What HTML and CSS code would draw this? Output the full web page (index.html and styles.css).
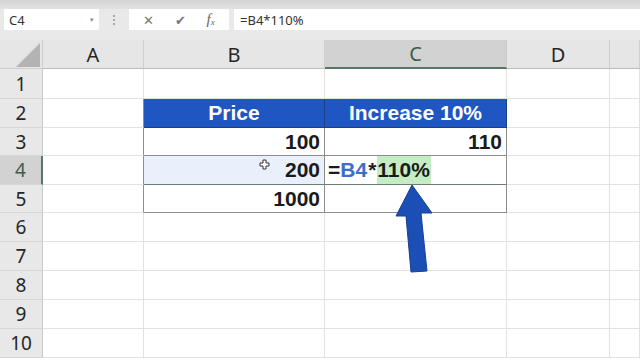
FILE: index.html
```html
<!DOCTYPE html>
<html lang="en">
<head>
<meta charset="utf-8">
<title>Excel – Increase 10%</title>
<link rel="stylesheet" href="styles.css">
</head>
<body>
<div class="topstrip"></div>

<!-- formula bar -->
<div class="fbar">
  <div class="namebox"><span>C4</span><span class="dd">&#9662;</span></div>
  <div class="grip"><i></i><i></i><i></i></div>
  <div class="btns">
    <span class="b-x">&#x2715;</span>
    <span class="b-ok">&#x2714;</span>
    <span class="b-fx">f<sub>x</sub></span>
  </div>
  <div class="finput">=B4*110%</div>
</div>

<!-- sheet -->
<div class="sheet">
  <div class="corner"><svg width="28" height="26" viewBox="0 0 28 26"><polygon points="26,1 26,25 2,25" fill="#b3b3b3"/></svg></div>
  <div class="ch">A</div><div class="ch">B</div><div class="ch sel">C</div><div class="ch">D</div><div class="ch"></div>

  <div class="rh">1</div><div class="c"></div><div class="c"></div><div class="c"></div><div class="c"></div><div class="c"></div>

  <div class="rh">2</div><div class="c tl"></div><div class="c th">Price</div><div class="c th">Increase 10%</div><div class="c"></div><div class="c"></div>

  <div class="rh">3</div><div class="c tl"></div><div class="c t num">100</div><div class="c t num">110</div><div class="c"></div><div class="c"></div>

  <div class="rh sel">4</div><div class="c tl"></div>
  <div class="c t num r4 b4">200
    <svg class="cur" width="11" height="11" viewBox="0 0 11 11"><path d="M4 1h3v3h3v3H7v3H4V7H1V4h3z" fill="#fff" stroke="#333" stroke-width="1"/></svg>
  </div>
  <div class="c t r4 act"><span>=</span><span class="ref">B4</span><span class="star">*</span><span class="hl">110%</span></div>
  <div class="c"></div><div class="c"></div>

  <div class="rh">5</div><div class="c tl"></div><div class="c t num">1000</div><div class="c t"></div><div class="c"></div><div class="c"></div>

  <div class="rh">6</div><div class="c"></div><div class="c"></div><div class="c"></div><div class="c"></div><div class="c"></div>
  <div class="rh">7</div><div class="c"></div><div class="c"></div><div class="c"></div><div class="c"></div><div class="c"></div>
  <div class="rh">8</div><div class="c"></div><div class="c"></div><div class="c"></div><div class="c"></div><div class="c"></div>
  <div class="rh">9</div><div class="c"></div><div class="c"></div><div class="c"></div><div class="c"></div><div class="c"></div>
  <div class="rh">10</div><div class="c"></div><div class="c"></div><div class="c"></div><div class="c"></div><div class="c"></div>

  <!-- pointer arrow -->
  <svg class="arrow" width="50" height="92" viewBox="0 0 50 92">
    <polygon points="22,2 42,30 31,30 37,88 21,89 16,33 6,33" fill="#1b4fb5" stroke="#163f94" stroke-width="1"/>
  </svg>
</div>
</body>
</html>
```

FILE: styles.css
```css
/* ── base ─────────────────────────── */
*,*::before,*::after{box-sizing:border-box}
body{margin:0;width:640px;height:360px;overflow:hidden;
     background:#fff;font-family:"Noto Sans","Liberation Sans",Arial,sans-serif;color:#222}

.topstrip{height:9px;background:linear-gradient(#d4d4d4,#e2e2e2)}

/* ── formula bar ──────────────────── */
.fbar{display:flex;align-items:center;height:31px;padding:0 0 10px 4px;
      background:#e9e9e9;font-size:13px}
.namebox{width:95px;height:21px;background:#fff;display:flex;align-items:center;
         justify-content:space-between;padding:0 5px 0 5px;color:#333}
.namebox .dd{font-size:7px;color:#888}
.grip{width:30px;display:flex;flex-direction:column;align-items:center;gap:2px}
.grip i{width:2px;height:2px;background:#aaa;display:block}
.btns{width:100px;height:21px;background:#fff;display:flex;align-items:center;
      justify-content:space-around;color:#666;font-size:14px;padding:0 4px}
.b-x{font-size:13px;color:#777}
.b-ok{font-size:13px;color:#777}
.b-fx{font-family:"Liberation Serif",serif;font-style:italic;font-size:15px;color:#666}
.b-fx sub{font-size:9px;vertical-align:-1px}
.finput{flex:1;height:21px;margin-left:5px;background:#fff;display:flex;align-items:center;
        padding-left:6px;color:#333}

/* ── sheet grid ───────────────────── */
.sheet{position:relative;display:grid;
       grid-template-columns:43px 101px 181px 182px 103px 30px;
       grid-template-rows:29px 30px 29px 28px 29px 28px 29px 29px 29px 29px 29px}
.corner{background:#e6e6e6;border-right:1px solid #cfcfcf;border-bottom:1px solid #cfcfcf;
        display:flex;align-items:flex-end;justify-content:flex-end}
.ch{background:#e6e6e6;border-right:1px solid #cfcfcf;border-bottom:1px solid #bcbcbc;
    display:flex;align-items:center;justify-content:center;font-size:20px;color:#262626}
.ch.sel{background:#d2d2d2;color:#3e5c4a;border-bottom:2px solid #597563}
.rh{background:#e8e8e8;border-right:1px solid #c9c9c9;border-bottom:1px solid #d6d6d6;
    display:flex;align-items:center;justify-content:center;font-size:19px;color:#262626}
.rh.sel{background:#d2d2d2;color:#3e5c4a;border-right:2px solid #597563}
.c{border-right:1px solid #e2e2e2;border-bottom:1px solid #e2e2e2}

/* ── table ────────────────────────── */
.tl{border-right-color:#8d8d8d}
.th{background:#1f56c2;border-color:#1c3f86;color:#fff;font-family:"Liberation Sans",Arial,sans-serif;
    font-weight:700;font-size:21px;display:flex;align-items:center;justify-content:center}
.t{border-right-color:#8d8d8d;border-bottom-color:#8d8d8d;
   font-family:"Liberation Sans",Arial,sans-serif;font-weight:700;font-size:21px;color:#1a1a1a;
   display:flex;align-items:center}
.num{justify-content:flex-end;padding-right:4px}
.r4{border-bottom-color:#6f7a72}
.b4{position:relative;background:#e9f0fb}
.cur{position:absolute;left:115px;top:3px}
.act{align-items:stretch;padding-left:3px}
.act span{display:flex;align-items:center}
.ref{color:#3b6ec8}
.star{padding:0 1px}
.hl{background:#c4edc4;padding-right:1px}

.arrow{position:absolute;left:390px;top:143px}
```
